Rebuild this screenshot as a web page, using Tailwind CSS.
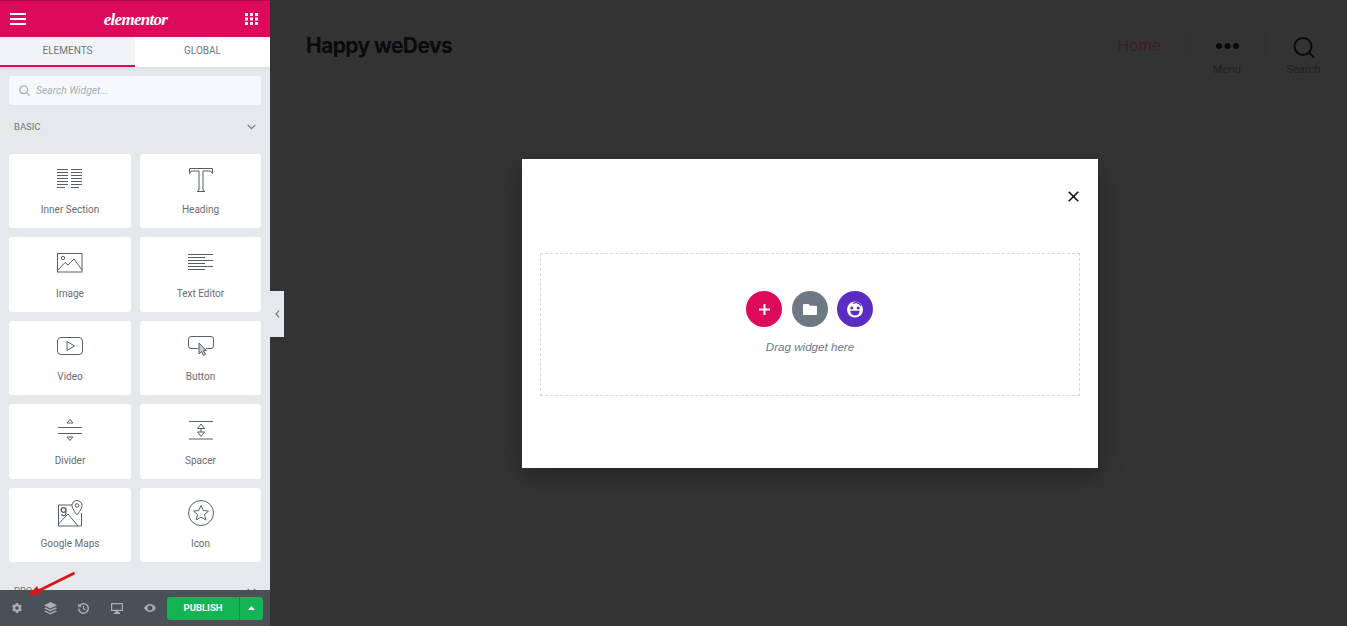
<!DOCTYPE html>
<html>
<head>
<meta charset="utf-8">
<title>Elementor</title>
<script src="https://cdn.jsdelivr.net/npm/@tailwindcss/browser@4"></script>
</head>
<body class="font-['Roboto',sans-serif]">
<div class="relative flex h-[626px] w-[1347px] overflow-hidden bg-[#333333]">

  <!-- sidebar -->
  <aside class="relative flex h-full w-[270px] shrink-0 flex-col bg-[#e6e9ec]">
    <div class="flex h-[37px] items-center justify-between border-t border-[#a80a48] bg-[#dd0a5c] pl-[10px] pr-[12px]">
      <svg width="16" height="12" viewBox="0 0 16 12" fill="#fff"><rect y="0" width="16" height="2"/><rect y="5" width="16" height="2"/><rect y="10" width="16" height="2"/></svg>
      <span class="font-['Liberation_Serif',serif] text-[17px] font-bold italic leading-none tracking-[-0.7px] text-white">elementor</span>
      <svg width="13" height="12" viewBox="0 0 13 12" fill="#fff"><rect x="0" y="0" width="3" height="3"/><rect x="5" y="0" width="3" height="3"/><rect x="10" y="0" width="3" height="3"/><rect x="0" y="4.5" width="3" height="3"/><rect x="5" y="4.5" width="3" height="3"/><rect x="10" y="4.5" width="3" height="3"/><rect x="0" y="9" width="3" height="3"/><rect x="5" y="9" width="3" height="3"/><rect x="10" y="9" width="3" height="3"/></svg>
    </div>
    <div class="flex h-[30px] text-[10px] uppercase text-[#6d7882] shadow-[0_2px_3px_rgba(0,0,0,0.05)]">
      <div class="flex w-[135px] items-center justify-center border-b-2 border-[#dd0a5c] bg-[#f1f3f5] pb-[2px]">Elements</div>
      <div class="flex w-[135px] items-center justify-center bg-white pb-[4px]">Global</div>
    </div>
    <div class="mx-[9px] mt-[9px] flex h-[29px] items-center gap-[6px] rounded-[3px] bg-[#f7f8f9] pl-[10px]">
      <svg width="11" height="11" viewBox="0 0 11 11" fill="none" stroke="#a4afb7" stroke-width="1.3"><circle cx="4.7" cy="4.7" r="3.9"/><path d="M7.6 7.6 10.5 10.5"/></svg>
      <span class="text-[10.3px] italic text-[#a4afb7]">Search Widget...</span>
    </div>
    <div class="mt-[15px] flex h-[14px] items-center justify-between pl-[14px] pr-[14px] text-[9.5px] uppercase text-[#6d7882]">
      <span>Basic</span>
      <svg width="9" height="6" viewBox="0 0 9 6" fill="none" stroke="#6d7882" stroke-width="1.2"><path d="M.7.8 4.5 4.6 8.3.8"/></svg>
    </div>
    <div class="mx-[9px] mt-[20px] grid grid-cols-[122px_121px] gap-x-[9px] gap-y-[9px] text-[10px] text-[#666c72]">
      <div class="flex h-[74px] flex-col items-center rounded-[3px] bg-white pt-[15px]">
        <svg width="26" height="20" viewBox="0 0 26 20" fill="none" stroke="#556068" stroke-width="1"><path d="M0 .5H11M14 .5H25M0 3.5H11M14 3.5H25M0 6.5H11M14 6.5H25M0 9.5H11M14 9.5H25M0 12.5H11M14 12.5H25M0 15.5H11M14 15.5H25M0 18.5H8M14 18.5H22"/></svg>
        <span class="mt-[13px]">Inner Section</span>
      </div>
      <div class="flex h-[74px] flex-col items-center rounded-[3px] bg-white pt-[14px]">
        <svg width="24" height="24" viewBox="0 0 24 24" fill="none" stroke="#556068" stroke-width="1"><path d="M.5.5H23.5V5.5L21.5 3H14V22L16 23.5H8L10 22V3H2.5L.5 5.5Z"/></svg>
        <span class="mt-[10px]">Heading</span>
      </div>
      <div class="flex h-[75px] flex-col items-center rounded-[3px] bg-white pt-[16px]">
        <svg width="26" height="20" viewBox="0 0 26 20" fill="none" stroke="#556068" stroke-width="1"><rect x=".5" y=".5" width="24.5" height="18.5"/><circle cx="6" cy="5" r="1.7"/><path d="M1 17 8 9.5 11 12 17 6 25 17"/></svg>
        <span class="mt-[13px]">Image</span>
      </div>
      <div class="flex h-[75px] flex-col items-center rounded-[3px] bg-white pt-[17px]">
        <svg width="26" height="18" viewBox="0 0 26 18" fill="none" stroke="#556068" stroke-width="1"><path d="M0 .5H25M0 3.5H17M0 6.5H25M0 9.5H17M0 12.5H25M0 15.5H17"/></svg>
        <span class="mt-[14px]">Text Editor</span>
      </div>
      <div class="flex h-[74px] flex-col items-center rounded-[3px] bg-white pt-[16px]">
        <svg width="26" height="18" viewBox="0 0 26 18" fill="none" stroke="#556068" stroke-width="1"><rect x=".5" y=".5" width="25" height="17" rx="3.5"/><path d="M10 4.5V13.500L17.5 9Z"/></svg>
        <span class="mt-[14px]">Video</span>
      </div>
      <div class="relative flex h-[74px] flex-col items-center rounded-[3px] bg-white pt-[15px]">
        <svg width="26" height="20" viewBox="0 0 26 20" fill="none" stroke="#556068" stroke-width="1"><path d="M10 12.5H3A2.5 2.5 0 0 1 .5 10V3A2.5 2.5 0 0 1 3 .5H23A2.5 2.5 0 0 1 25.5 3V10A2.5 2.5 0 0 1 23 12.5H18"/><path d="M11 7V18L13.5 15.5 15.5 19.5 17.5 18.5 15.5 14.5H18.5Z" fill="#c9ced2"/></svg>
        <span class="mt-[13px]">Button</span>
      </div>
      <div class="flex h-[75px] flex-col items-center rounded-[3px] bg-white pt-[14px]">
        <svg width="24" height="24" viewBox="0 0 24 24" fill="none" stroke="#556068" stroke-width="1"><path d="M9 5 12 1.5 15 5ZM9 19 12 22.5 15 19ZM0 9.5H24M0 15.5H24"/></svg>
        <span class="mt-[11px]">Divider</span>
      </div>
      <div class="flex h-[75px] flex-col items-center rounded-[3px] bg-white pt-[17px]">
        <svg width="24" height="19" viewBox="0 0 24 19" fill="none" stroke="#556068" stroke-width="1"><path d="M0 .5H24M0 18H24M8.5 7.5 12 3 15.500 7.500ZM8.500 11 12 15.500 15.500 11ZM12 7.500V11"/></svg>
        <span class="mt-[13px]">Spacer</span>
      </div>
      <div class="flex h-[74px] flex-col items-center rounded-[3px] bg-white pt-[12px]">
        <svg width="25" height="27" viewBox="0 0 25 27" fill="none" stroke="#556068" stroke-width="1"><path d="M14 5H.5V26H23.500V13"/><path d="M.5 24 10 14 20 26"/><path d="M19 0.500A5 5 0 0 0 14 5.500C14 9 19 15 19 15S24 9 24 5.500A5 5 0 0 0 19 .5Z"/><circle cx="19" cy="5.500" r="1.800"/><circle cx="5.500" cy="10" r="2.300" stroke-width="1.300"/><path d="M7.800 8V14C7.800 16 4 16 3.500 14.500" stroke-width="1.300"/></svg>
        <span class="mt-[9px]">Google Maps</span>
      </div>
      <div class="flex h-[74px] flex-col items-center rounded-[3px] bg-white pt-[12px]">
        <svg width="26" height="26" viewBox="0 0 26 26" fill="none" stroke="#556068" stroke-width="1"><circle cx="13" cy="13" r="12.500"/><path d="M13 5.500 15.300 10.500 20.500 11 16.500 14.500 17.800 20 13 17.100 8.200 20 9.500 14.500 5.500 11 10.700 10.500Z"/></svg>
        <span class="mt-[10px]">Icon</span>
      </div>
    </div>
    <div class="mt-[22px] flex h-[14px] items-center justify-between px-[14px] text-[9.5px] uppercase text-[#6d7882]">
      <span>Pro</span>
      <svg width="9" height="6" viewBox="0 0 9 6" fill="none" stroke="#6d7882" stroke-width="1.2"><path d="M.7.8 4.500 4.600 8.300.8"/></svg>
    </div>

    <!-- bottom bar -->
    <div class="absolute bottom-0 left-0 flex h-[36px] w-[270px] items-center bg-[#495157] pl-[11px] pr-[7px]">
      <svg class="mr-[21px]" width="12" height="12" viewBox="0 0 24 24" fill="#a4afb7"><path d="M19.400 13a7.500 7.500 0 0 0 0-2l2.100-1.600a.5.5 0 0 0 .1-.6l-2-3.500a.5.5 0 0 0-.6-.2l-2.500 1a7.300 7.300 0 0 0-1.700-1l-.4-2.600a.5.5 0 0 0-.5-.5h-4a.5.5 0 0 0-.5.400l-.4 2.700a7.300 7.300 0 0 0-1.700 1l-2.500-1a.5.5 0 0 0-.6.2l-2 3.500a.5.5 0 0 0 .1.600L4.600 11a7.500 7.500 0 0 0 0 2l-2.100 1.600a.5.5 0 0 0-.1.600l2 3.500a.5.5 0 0 0 .6.2l2.500-1a7.300 7.300 0 0 0 1.700 1l.4 2.600a.5.5 0 0 0 .5.500h4a.5.5 0 0 0 .5-.4l.4-2.700a7.300 7.300 0 0 0 1.700-1l2.500 1a.5.5 0 0 0 .6-.2l2-3.500a.5.5 0 0 0-.1-.6ZM12 15.500a3.500 3.500 0 1 1 0-7 3.500 3.500 0 0 1 0 7Z"/></svg>
      <svg class="mr-[21px]" width="13" height="13" viewBox="0 0 13 13" fill="#a4afb7"><path d="M6.500 0 13 3.200 6.500 6.400 0 3.200Z"/><path d="M1.500 5.300 6.500 7.800 11.500 5.300 13 6.200 6.500 9.500 0 6.200Z"/><path d="M1.500 8.400 6.500 10.900 11.500 8.400 13 9.300 6.500 12.600 0 9.300Z"/></svg>
      <svg class="mr-[22px]" width="11" height="11" viewBox="0 0 11 11" fill="none" stroke="#a4afb7" stroke-width="1.500"><path d="M1.500 3A4.700 4.700 0 1 1 .8 5.500"/><path d="M.8 1V3.500H3.300" stroke-width="1.200"/><path d="M5.500 3V5.800L7.500 7" stroke-width="1.200"/></svg>
      <svg class="mr-[22px]" width="12" height="11" viewBox="0 0 12 11" fill="#a4afb7"><path d="M0 0H12V8H7.500V9.500H9V11H3V9.500H4.500V8H0ZM1.200 1.200V6.800H10.800V1.200Z"/></svg>
      <svg class="mr-[11px] ml-[-1px]" width="12" height="8" viewBox="0 0 12 8" fill="#a4afb7"><path d="M6 0C3.300 0 1.200 1.700 0 4c1.200 2.300 3.300 4 6 4s4.800-1.700 6-4C10.800 1.700 8.700 0 6 0Zm0 6.500a2.500 2.500 0 1 1 0-5 2.500 2.500 0 0 1 0 5Z"/></svg>
      <div class="flex h-[23px] w-[73px] items-center justify-center rounded-l-[3px] border-r border-[#0f8a47] bg-[#12b454] text-[9.5px] font-bold text-white">PUBLISH</div>
      <div class="flex h-[23px] w-[23px] items-center justify-center rounded-r-[3px] bg-[#12b454]">
        <svg width="7" height="4" viewBox="0 0 7 4" fill="#fff"><path d="M0 4 3.500 0 7 4Z"/></svg>
      </div>
    </div>
    <!-- red annotation arrow -->
    <svg class="absolute left-[24px] top-[570px]" width="54" height="32" viewBox="0 0 54 32" fill="none"><path d="M49.500 3.500 10 23" stroke="#e0101c" stroke-width="2.800" stroke-linecap="round"/><path d="M4 25.500 13 16 17 24Z" fill="#e0101c"/></svg>
  </aside>

  <!-- collapse handle -->
  <div class="absolute left-[270px] top-[291px] flex h-[46px] w-[14px] items-center justify-center bg-[#e6e9ec]">
    <svg width="5" height="8" viewBox="0 0 5 8" fill="none" stroke="#6d7882" stroke-width="1.200"><path d="M4.200.7 1 4 4.200 7.300"/></svg>
  </div>

  <!-- site preview behind the overlay -->
  <main class="relative flex-1">
    <header class="flex items-start justify-between pl-[36px] pr-[6px] pt-[33px]">
      <h1 class="font-['Inter','Liberation_Sans',sans-serif] text-[21px] font-bold leading-[25px] tracking-[-0.6px] text-[#0a0a0c]">Happy weDevs</h1>
      <nav class="flex items-start font-['Inter','Liberation_Sans',sans-serif]">
        <a class="mt-[3px] mr-[27px] text-[15.5px] leading-[19px] text-[#3f1c28]">Home</a>
        <div class="h-[24px] w-px bg-[#2f2f2f]"></div>
        <div class="flex w-[76px] flex-col items-center pt-[10px]">
          <svg width="23" height="6" viewBox="0 0 23 6" fill="#0a0a0a"><circle cx="3" cy="3" r="3"/><circle cx="11.500" cy="3" r="3"/><circle cx="20" cy="3" r="3"/></svg>
          <span class="mt-[14px] text-[10.500px] leading-[13px] text-[#1f1f1f]">Menu</span>
        </div>
        <div class="h-[24px] w-px bg-[#2f2f2f]"></div>
        <div class="flex w-[75px] flex-col items-center pt-[4px]">
          <svg width="22" height="21" viewBox="0 0 22 21" fill="none" stroke="#0a0a0a" stroke-width="2"><circle cx="10" cy="9.500" r="8.500"/><path d="M16 15.500 21 20.500"/></svg>
          <span class="mt-[5px] text-[10.300px] leading-[13px] text-[#1f1f1f]">Search</span>
        </div>
      </nav>
    </header>

    <!-- popup -->
    <div class="absolute left-[252px] top-[159px] h-[309px] w-[576px] bg-white px-[18px] pt-[32px] shadow-[0_8px_24px_rgba(0,0,0,0.3)]">
      <div class="flex justify-end pr-[1px]">
        <svg width="11" height="11" viewBox="0 0 11 11" fill="none" stroke="#111" stroke-width="1.600"><path d="M.7.7 10.300 10.300M10.300.7.7 10.300"/></svg>
      </div>
      <div class="mt-[51px] flex h-[143px] flex-col items-center border border-dashed border-[#d5dadf] pt-[37px]">
        <div class="flex items-center pr-[1px]">
          <div class="mr-[10px] flex h-[36px] w-[36px] items-center justify-center rounded-full bg-[#dd0a5c]">
            <svg width="11" height="11" viewBox="0 0 11 11" fill="#fff"><path d="M4.500 0H6.500V4.500H11V6.500H6.500V11H4.500V6.500H0V4.500H4.500Z"/></svg>
          </div>
          <div class="mr-[9px] flex h-[36px] w-[36px] items-center justify-center rounded-full bg-[#6d7882]">
            <svg width="14" height="11" viewBox="0 0 14 11" fill="#fff"><path d="M1 0H5.500L7 1.800H13A1 1 0 0 1 14 2.800V10A1 1 0 0 1 13 11H1A1 1 0 0 1 0 10V1A1 1 0 0 1 1 0Z"/></svg>
          </div>
          <div class="flex h-[36px] w-[36px] items-center justify-center rounded-full bg-[#5c2cc2]">
            <svg width="18" height="18" viewBox="0 0 18 18"><circle cx="9" cy="9.500" r="8" fill="#fff"/><path d="M7 3.500C10 1.800 13.500 3 15 6" fill="none" stroke="#5c2cc2" stroke-width="1.300"/><circle cx="5.800" cy="8" r="1.500" fill="#5c2cc2"/><circle cx="12.200" cy="8" r="1.500" fill="#5c2cc2"/><path d="M4.300 10.800H13.700C13.500 13.800 11.500 15.500 9 15.500S4.500 13.800 4.300 10.800Z" fill="#5c2cc2"/></svg>
          </div>
        </div>
        <span class="mt-[11px] font-['Liberation_Sans',sans-serif] text-[11.6px] italic text-[#6d7882]">Drag widget here</span>
      </div>
    </div>
  </main>
</div>
</body>
</html>
